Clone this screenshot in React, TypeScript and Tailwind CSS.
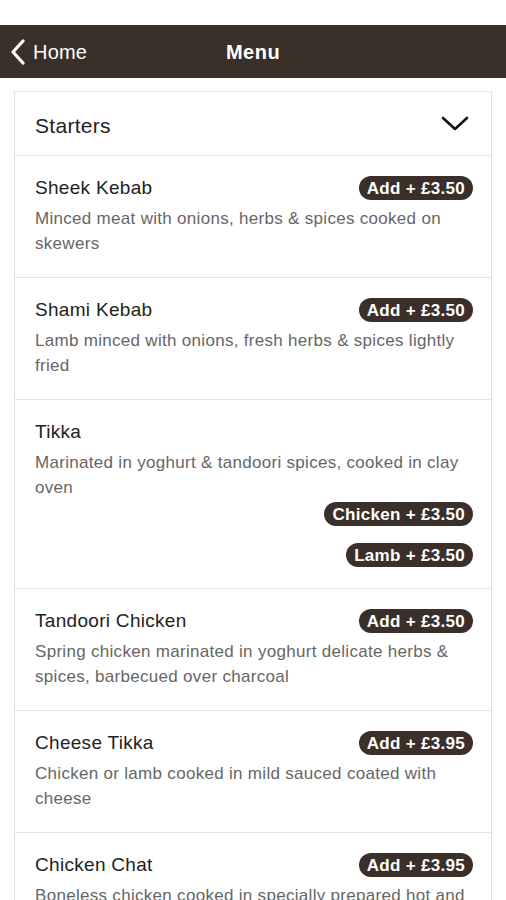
import React from "react";

interface MenuItem {
  name: string;
  description: string;
  options: string[];
}

const items: MenuItem[] = [
  {
    name: "Sheek Kebab",
    description: "Minced meat with onions, herbs & spices cooked on skewers",
    options: ["Add + £3.50"],
  },
  {
    name: "Shami Kebab",
    description: "Lamb minced with onions, fresh herbs & spices lightly fried",
    options: ["Add + £3.50"],
  },
  {
    name: "Tikka",
    description: "Marinated in yoghurt & tandoori spices, cooked in clay oven",
    options: ["Chicken + £3.50", "Lamb + £3.50"],
  },
  {
    name: "Tandoori Chicken",
    description: "Spring chicken marinated in yoghurt delicate herbs & spices, barbecued over charcoal",
    options: ["Add + £3.50"],
  },
  {
    name: "Cheese Tikka",
    description: "Chicken or lamb cooked in mild sauced coated with cheese",
    options: ["Add + £3.95"],
  },
  {
    name: "Chicken Chat",
    description: "Boneless chicken cooked in specially prepared hot and spicy sauce",
    options: ["Add + £3.95"],
  },
];

function PriceBadge({ label }: { label: string }) {
  return (
    <span className="mr-[-2px] inline-flex h-[24px] items-center rounded-full bg-[#3a3029] px-[8px] text-[17px] font-bold leading-none tracking-[0.3px] text-white">
      {label}
    </span>
  );
}

function ItemRow({ item }: { item: MenuItem }) {
  const single = item.options.length === 1;
  return (
    <div className="border-t border-[#e2e2e2] px-5 pb-[21px] pt-5">
      <div className="flex h-[24px] items-center justify-between">
        <span className="text-[19px] tracking-[0.3px] text-[#222]">{item.name}</span>
        {single && <PriceBadge label={item.options[0]} />}
      </div>
      <p className="mt-[6px] text-[17px] leading-[25px] tracking-[0.3px] text-[#666]">
        {item.description}
      </p>
      {!single && (
        <div className="mt-[2px] flex flex-col items-end gap-[17px]">
          {item.options.map((opt) => (
            <PriceBadge key={opt} label={opt} />
          ))}
        </div>
      )}
    </div>
  );
}

export default function App() {
  return (
    <div
      className="h-[900px] w-[506px] overflow-hidden bg-white"
      style={{ fontFamily: '"Liberation Sans", Arial, sans-serif' }}
    >
      <div className="h-[25px]" />
      <header className="relative flex h-[53px] items-center bg-[#3a3029] text-white">
        <div className="flex items-center pl-[10px]">
          <svg width="16" height="26" viewBox="0 0 16 26" fill="none">
            <path d="M13 2 L3 13 L13 24" stroke="white" strokeWidth="3.2" strokeLinecap="round" strokeLinejoin="round" />
          </svg>
          <span className="ml-[7px] text-[20px] tracking-[0.2px]">Home</span>
        </div>
        <span className="absolute left-1/2 -translate-x-1/2 text-[20px] font-bold tracking-[0.5px]">Menu</span>
      </header>
      <div className="mx-[14px] mt-[13px] border border-b-0 border-[#e2e2e2]">
        <div className="flex h-[63px] items-center justify-between pl-5 pr-[22px]">
          <span className="pt-[5px] text-[21px] tracking-[0.3px] text-[#222]">Starters</span>
          <svg width="28" height="16" viewBox="0 0 28 16" fill="none">
            <path d="M2 2 L14 13 L26 2" stroke="#111" strokeWidth="2.6" strokeLinecap="round" strokeLinejoin="round" />
          </svg>
        </div>
        {items.map((item) => (
          <ItemRow key={item.name} item={item} />
        ))}
      </div>
    </div>
  );
}
